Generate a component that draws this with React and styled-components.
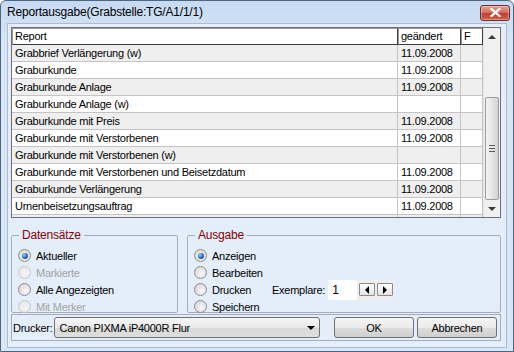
import React from 'react';
import styled, { createGlobalStyle } from 'styled-components';

const GlobalStyle = createGlobalStyle`
  html, body {
    margin: 0;
    padding: 0;
    background: #ffffff;
  }
  body {
    font-family: "Liberation Sans", Arial, sans-serif;
    font-size: 11px;
    letter-spacing: -0.25px;
    color: #000;
  }
`;

const reports = [
  { name: 'Grabbrief Verlängerung (w)', date: '11.09.2008' },
  { name: 'Graburkunde', date: '11.09.2008' },
  { name: 'Graburkunde Anlage', date: '11.09.2008' },
  { name: 'Graburkunde Anlage (w)', date: '' },
  { name: 'Graburkunde mit Preis', date: '11.09.2008' },
  { name: 'Graburkunde mit Verstorbenen', date: '11.09.2008' },
  { name: 'Graburkunde mit Verstorbenen (w)', date: '' },
  { name: 'Graburkunde mit Verstorbenen und Beisetzdatum', date: '11.09.2008' },
  { name: 'Graburkunde Verlängerung', date: '11.09.2008' },
  { name: 'Urnenbeisetzungsauftrag', date: '11.09.2008' },
  { name: '', date: '' },
];

const Window = styled.div`
  box-sizing: border-box;
  width: 514px;
  height: 352px;
  border: 1px solid #4f6682;
  border-radius: 6px 6px 0 0;
  background: linear-gradient(#c6daf2, #d7e5f6 40px, #d9e6f6);
  display: flex;
  flex-direction: column;
`;

const TitleBar = styled.div`
  height: 22px;
  display: flex;
  align-items: center;
  justify-content: space-between;
  padding: 0 3px 0 6px;
  font-size: 12px;
  letter-spacing: -0.2px;
  color: #000;
`;

const CloseButton = styled.div`
  width: 28px;
  height: 14px;
  margin-top: 1px;
  border: 1px solid #6b2e2a;
  border-radius: 3px;
  background: linear-gradient(#e3a396, #d16a5a 50%, #bf3e2e 51%, #d0624e);
  display: flex;
  align-items: center;
  justify-content: center;
  box-shadow: inset 0 0 0 1px rgba(255, 255, 255, 0.35);
`;

const Client = styled.div`
  flex: 1;
  margin: 0 6px 3px 6px;
  border: 1px solid #a9bcd3;
  background: #e4eefa;
  padding: 3px 5px 2px 3px;
  display: flex;
  flex-direction: column;
`;

const Grid = styled.div`
  height: 191px;
  box-sizing: border-box;
  border: 1px solid #707070;
  background: #fff;
  display: flex;
  overflow: hidden;
`;

const Table = styled.div`
  flex: 1;
  display: flex;
  flex-direction: column;
`;

const Row = styled.div`
  display: grid;
  grid-template-columns: 386px 63px 22px;
  height: 17px;
  flex-shrink: 0;
  background: ${p => (p.$alt ? '#efefef' : '#ffffff')};
`;

const HeadCell = styled.div`
  box-sizing: border-box;
  padding: 0 2px;
  line-height: 15px;
  border: 1px solid #9a9a9a;
  border-right-color: #3c3c3c;
  border-bottom-color: #3c3c3c;
  background: #fff;
  white-space: nowrap;
  overflow: hidden;
`;

const Cell = styled.div`
  box-sizing: border-box;
  padding: 0 3px;
  line-height: 16px;
  border-right: 1px solid #c4c4c4;
  border-bottom: 1px solid #c4c4c4;
  white-space: nowrap;
  overflow: hidden;
`;

const ScrollBar = styled.div`
  width: 17px;
  box-sizing: border-box;
  background: #f0f0f0;
  border-left: 1px solid #e4e4e4;
  display: flex;
  flex-direction: column;
`;

const ScrollArrow = styled.div`
  height: 17px;
  display: flex;
  align-items: center;
  justify-content: center;
`;

const ScrollTrack = styled.div`
  flex: 1;
  display: flex;
  flex-direction: column;
  padding: 52px 1px 0 1px;
`;

const Thumb = styled.div`
  height: 103px;
  box-sizing: border-box;
  border: 1px solid #9c9c9c;
  border-radius: 2px;
  background: linear-gradient(90deg, #f4f4f4, #e6e6e6 50%, #d2d2d2);
  display: flex;
  align-items: center;
  justify-content: center;
`;

const Grip = styled.div`
  width: 6px;
  height: 7px;
  background: repeating-linear-gradient(#5a5a5a 0 1px, transparent 1px 3px);
`;

const Options = styled.div`
  display: grid;
  grid-template-columns: 167px 314px;
  column-gap: 9px;
  margin-top: 11px;
`;

const Group = styled.fieldset`
  margin: 0;
  padding: 6px 0 0 6px;
  height: 84px;
  box-sizing: border-box;
  border: 1px solid #a4adb8;
  border-radius: 2px;
  min-width: 0;
`;

const Legend = styled.legend`
  padding: 0 3px;
  margin-left: 1px;
  color: #8b0000;
  font-size: 12px;
  line-height: 12px;
  letter-spacing: -0.2px;
`;

const OptionRow = styled.div`
  display: flex;
  align-items: center;
  height: 17px;
  gap: 5px;
  color: ${p => (p.$disabled ? '#a3a3a3' : '#000')};
`;

const Radio = styled.span`
  width: 13px;
  height: 13px;
  box-sizing: border-box;
  border-radius: 50%;
  border: 1px solid ${p => (p.$disabled ? '#c8c8c8' : '#8c8c8c')};
  background: ${p =>
    p.$disabled
      ? 'radial-gradient(circle at 60% 60%, #f4f4f4, #e2e2e2)'
      : 'radial-gradient(circle at 60% 60%, #f8f8f8, #d0d0d0)'};
  display: flex;
  align-items: center;
  justify-content: center;
  flex-shrink: 0;
  &::after {
    content: '';
    display: ${p => (p.$checked ? 'block' : 'none')};
    width: 6px;
    height: 6px;
    border-radius: 50%;
    background: radial-gradient(circle at 35% 35%, #8fd0ff, #1d5fa8 60%, #0b3e7a);
  }
`;

const DruckenLabel = styled.span`
  width: 55px;
`;

const ExemplarRow = styled.div`
  display: flex;
  align-items: center;
  gap: 3px;
`;

const NumberBox = styled.div`
  width: 29px;
  height: 20px;
  box-sizing: border-box;
  background: #fff;
  padding: 0 4px;
  line-height: 20px;
  font-size: 12px;
`;

const Spinner = styled.div`
  height: 20px;
  background: #eeeeee;
  display: flex;
  align-items: center;
  gap: 2px;
  padding: 0 2px;
  margin-left: -3px;
`;

const SpinButton = styled.div`
  width: 16px;
  height: 13px;
  box-sizing: border-box;
  border: 1px solid #8a8a8a;
  border-radius: 1px;
  background: linear-gradient(#ffffff, #e4e4e4);
  display: flex;
  align-items: center;
  justify-content: center;
`;

const ActionBar = styled.div`
  margin-top: 1px;
  height: 27px;
  box-sizing: border-box;
  border: 1px solid #a4adb8;
  display: flex;
  align-items: center;
  gap: 1px;
  padding: 0 3px 0 1px;
`;

const Combo = styled.div`
  width: 266px;
  height: 21px;
  box-sizing: border-box;
  border: 1px solid #707070;
  border-radius: 3px;
  background: linear-gradient(#f6f6f6, #e8e8e8 50%, #d9d9d9 51%, #dedede);
  display: flex;
  align-items: center;
  justify-content: space-between;
  padding: 0 4px 0 5px;
`;

const Buttons = styled.div`
  margin-left: auto;
  display: flex;
  gap: 3px;
`;

const Button = styled.div`
  width: 80px;
  height: 21px;
  box-sizing: border-box;
  border: 1px solid #707070;
  border-radius: 3px;
  background: linear-gradient(#f4f4f4, #ebebeb 50%, #dddddd 51%, #cfcfcf);
  display: flex;
  align-items: center;
  justify-content: center;
`;

function Triangle({ dir, size = 4, color = '#000' }) {
  const s = size;
  let points;
  if (dir === 'up') points = `0,${s} ${s},0 ${2 * s},${s}`;
  if (dir === 'down') points = `0,0 ${2 * s},0 ${s},${s}`;
  if (dir === 'left') points = `${s},0 ${s},${2 * s} 0,${s}`;
  if (dir === 'right') points = `0,0 0,${2 * s} ${s},${s}`;
  const horiz = dir === 'left' || dir === 'right';
  return (
    <svg width={horiz ? s : 2 * s} height={horiz ? 2 * s : s}>
      <polygon points={points} fill={color} />
    </svg>
  );
}

function RadioOption({ label, checked, disabled }) {
  return (
    <OptionRow $disabled={disabled}>
      <Radio $checked={checked} $disabled={disabled} />
      {label}
    </OptionRow>
  );
}

export default function App() {
  return (
    <>
      <GlobalStyle />
      <Window>
        <TitleBar>
          Reportausgabe(Grabstelle:TG/A1/1/1)
          <CloseButton>
            <svg width="11" height="9" viewBox="0 0 11 9">
              <path d="M1.5 1 L9.5 8 M9.5 1 L1.5 8" stroke="#fff" strokeWidth="2.2" strokeLinecap="square" />
            </svg>
          </CloseButton>
        </TitleBar>
        <Client>
          <Grid>
            <Table>
              <Row>
                <HeadCell>Report</HeadCell>
                <HeadCell>geändert</HeadCell>
                <HeadCell>F</HeadCell>
              </Row>
              {reports.map((r, i) => (
                <Row key={i} $alt={i % 2 === 0}>
                  <Cell>{r.name}</Cell>
                  <Cell>{r.date}</Cell>
                  <Cell />
                </Row>
              ))}
            </Table>
            <ScrollBar>
              <ScrollArrow>
                <Triangle dir="up" size={4} color="#3a3a3a" />
              </ScrollArrow>
              <ScrollTrack>
                <Thumb>
                  <Grip />
                </Thumb>
              </ScrollTrack>
              <ScrollArrow>
                <Triangle dir="down" size={4} color="#3a3a3a" />
              </ScrollArrow>
            </ScrollBar>
          </Grid>
          <Options>
            <Group>
              <Legend>Datensätze</Legend>
              <RadioOption label="Aktueller" checked />
              <RadioOption label="Markierte" disabled />
              <RadioOption label="Alle Angezeigten" />
              <RadioOption label="Mit Merker" disabled />
            </Group>
            <Group>
              <Legend>Ausgabe</Legend>
              <RadioOption label="Anzeigen" checked />
              <RadioOption label="Bearbeiten" />
              <OptionRow>
                <Radio />
                <DruckenLabel>Drucken</DruckenLabel>
                <ExemplarRow>
                  Exemplare:
                  <NumberBox>1</NumberBox>
                  <Spinner>
                    <SpinButton>
                      <Triangle dir="left" size={4} />
                    </SpinButton>
                    <SpinButton>
                      <Triangle dir="right" size={4} />
                    </SpinButton>
                  </Spinner>
                </ExemplarRow>
              </OptionRow>
              <RadioOption label="Speichern" />
            </Group>
          </Options>
          <ActionBar>
            <span>Drucker:</span>
            <Combo>
              Canon PIXMA iP4000R Flur
              <Triangle dir="down" size={4} />
            </Combo>
            <Buttons>
              <Button>OK</Button>
              <Button>Abbrechen</Button>
            </Buttons>
          </ActionBar>
        </Client>
      </Window>
    </>
  );
}
